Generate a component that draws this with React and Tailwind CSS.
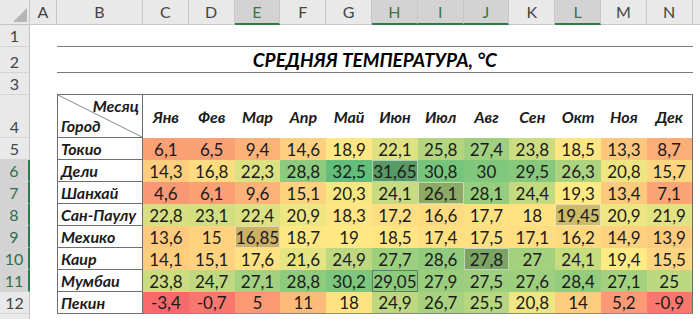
import React from "react";

const cols = ["C", "D", "E", "F", "G", "H", "I", "J", "K", "L", "M", "N"];
const selectedCols = ["E", "H", "I", "J", "L"];
const months = ["Янв", "Фев", "Мар", "Апр", "Май", "Июн", "Июл", "Авг", "Сен", "Окт", "Ноя", "Дек"];

const cities = [
  ["Токио", [6.1, 6.5, 9.4, 14.6, 18.9, 22.1, 25.8, 27.4, 23.8, 18.5, 13.3, 8.7]],
  ["Дели", [14.3, 16.8, 22.3, 28.8, 32.5, 31.65, 30.8, 30, 29.5, 26.3, 20.8, 15.7]],
  ["Шанхай", [4.6, 6.1, 9.6, 15.1, 20.3, 24.1, 26.1, 28.1, 24.4, 19.3, 13.4, 7.1]],
  ["Сан-Паулу", [22.8, 23.1, 22.4, 20.9, 18.3, 17.2, 16.6, 17.7, 18, 19.45, 20.9, 21.9]],
  ["Мехико", [13.6, 15, 16.85, 18.7, 19, 18.5, 17.4, 17.5, 17.1, 16.2, 14.9, 13.9]],
  ["Каир", [14.1, 15.1, 17.6, 21.6, 24.9, 27.7, 28.6, 27.8, 27, 24.1, 19.4, 15.5]],
  ["Мумбаи", [23.8, 24.7, 27.1, 28.8, 30.2, 29.05, 27.9, 27.5, 27.6, 28.4, 27.1, 25]],
  ["Пекин", [-3.4, -0.7, 5, 11, 18, 24.9, 26.7, 25.5, 20.8, 14, 5.2, -0.9]],
];

// ctrl-selected cells (city index, month index)
const shaded = ["1-5", "2-6", "3-9", "4-2", "5-7"];
const active = "6-5";

// excel 3-color scale: min red, 50th percentile yellow, max green
const all = cities.flatMap((c) => c[1]).sort((a, b) => a - b);
const min = all[0];
const max = all[all.length - 1];
const pos = (all.length - 1) * 0.5;
const mid = all[Math.floor(pos)] + (all[Math.ceil(pos)] - all[Math.floor(pos)]) * (pos - Math.floor(pos));

const red = [248, 105, 107];
const yellow = [255, 235, 132];
const green = [99, 190, 123];

const mix = (a, b, t) => a.map((v, i) => Math.round(v + (b[i] - v) * t));

const scaleColor = (v) => {
  const c = v <= mid ? mix(red, yellow, (v - min) / (mid - min)) : mix(yellow, green, (v - mid) / (max - mid));
  return `rgb(${c[0]}, ${c[1]}, ${c[2]})`;
};

const fmt = (v) => String(v).replace(".", ",");

const RowHead = ({ n, h, selected }) => (
  <div
    className={`w-[30px] shrink-0 flex items-end justify-center border-b border-[#d4d4d4] text-[16px] leading-[20px] ${
      selected
        ? "bg-[#d3d3d3] text-[#2f6f47] border-r-2 border-r-[#2f7a4c]"
        : "bg-[#e9e9e9] text-[#444] border-r border-r-[#c4c4c4]"
    } ${h}`}
  >
    {n}
  </div>
);

const App = () => {
  return (
    <div className="w-[700px] h-[319px] overflow-hidden bg-white font-['Lato','Open_Sans',sans-serif] text-[#1b1b1b]">
      {/* column headers */}
      <div className="flex h-[25px]">
        <div className="w-[30px] shrink-0 relative bg-[#e9e9e9] border-r border-b border-[#c4c4c4]">
          <svg className="absolute right-[2px] bottom-[2px]" width="14" height="14" viewBox="0 0 14 14">
            <polygon points="14,0 14,14 0,14" fill="#b5b5b5" />
          </svg>
        </div>
        <div className="w-[27px] shrink-0 flex items-center justify-center bg-[#e9e9e9] border-r border-b border-[#c8c8c8] text-[16px] text-[#444]">
          A
        </div>
        <div className="w-[86px] shrink-0 flex items-center justify-center bg-[#e9e9e9] border-r border-b border-[#c8c8c8] text-[16px] text-[#444]">
          B
        </div>
        {cols.map((c) => {
          const sel = selectedCols.includes(c);
          return (
            <div
              key={c}
              className={`w-[45.8px] shrink-0 flex items-center justify-center border-r border-[#c8c8c8] text-[16px] ${
                sel
                  ? "bg-[#d3d3d3] text-[#3a7350] border-b-2 border-b-[#2f7a4c]"
                  : "bg-[#e9e9e9] text-[#444] border-b border-b-[#c8c8c8]"
              }`}
            >
              {c}
            </div>
          );
        })}
        <div className="flex-1 bg-[#e9e9e9] border-b border-[#c8c8c8]" />
      </div>

      {/* row 1 */}
      <div className="flex h-[22px]">
        <RowHead n={1} h="h-[22px]" />
        <div className="w-[27px] shrink-0" />
        <div className="w-[635.6px] shrink-0 border-b border-[#7a7a7a]" />
      </div>

      {/* row 2 - title */}
      <div className="flex h-[26px]">
        <RowHead n={2} h="h-[26px]" />
        <div className="w-[27px] shrink-0" />
        <div className="w-[635.6px] shrink-0 flex items-center justify-center pt-[1px] border-b border-[#7a7a7a] text-[19px] font-bold italic text-black">
          СРЕДНЯЯ ТЕМПЕРАТУРА, °С
        </div>
      </div>

      {/* row 3 */}
      <div className="flex h-[22px]">
        <RowHead n={3} h="h-[22px]" />
        <div className="w-[27px] shrink-0" />
        <div className="w-[635.6px] shrink-0 border-b border-[#6f6f6f]" />
      </div>

      {/* row 4 - months */}
      <div className="flex h-[43px]">
        <RowHead n={4} h="h-[43px]" />
        <div className="w-[27px] shrink-0" />
        <div className="w-[86px] shrink-0 relative border-l border-r border-b border-[#6f6f6f] font-bold italic text-[16px]">
          <svg className="absolute inset-0" width="100%" height="100%" viewBox="0 0 85 42" preserveAspectRatio="none">
            <line x1="0" y1="0" x2="85" y2="42" stroke="#8a8a8a" strokeWidth="1" />
          </svg>
          <div className="flex flex-col h-full px-[3px] pt-[1px]">
            <span className="self-end leading-[20px]">Месяц</span>
            <span className="self-start leading-[20px]">Город</span>
          </div>
        </div>
        {months.map((m, i) => (
          <div
            key={m}
            className={`w-[45.8px] shrink-0 flex items-center justify-center font-bold italic text-[16px] ${
              i === 11 ? "border-r border-[#6f6f6f]" : ""
            }`}
          >
            {m}
          </div>
        ))}
      </div>

      {/* rows 5-12 */}
      {cities.map(([name, vals], r) => (
        <div key={name} className="flex h-[22px]">
          <RowHead n={r + 5} h="h-[22px]" selected={r >= 1 && r <= 6} />
          <div className="w-[27px] shrink-0" />
          <div className="w-[86px] shrink-0 flex items-center px-[3px] pt-[1px] border-l border-r border-b border-[#6f6f6f] font-bold italic text-[16px]">
            {name}
          </div>
          {vals.map((v, i) => {
            const key = `${r}-${i}`;
            return (
              <div
                key={i}
                className={`w-[45.8px] shrink-0 relative flex items-center justify-center pt-[1px] text-[17px] ${
                  i === 11 ? "border-r border-[#6f6f6f]" : ""
                } ${r === 7 ? "border-b border-b-[#8a8a8a]" : ""}`}
                style={{ backgroundColor: scaleColor(v) }}
              >
                {shaded.includes(key) && (
                  <div className="absolute inset-0 bg-[rgba(0,0,0,0.2)] border border-[rgba(255,255,255,0.55)]" />
                )}
                {key === active && <div className="absolute inset-0 border border-[#5f7f66]" />}
                <span className="relative">{fmt(v)}</span>
              </div>
            );
          })}
        </div>
      ))}

      {/* row 13 (partial) */}
      <div className="flex h-[10px]">
        <div className="w-[30px] shrink-0 bg-[#e9e9e9] border-r border-[#c4c4c4]" />
      </div>
    </div>
  );
};

export default App;
